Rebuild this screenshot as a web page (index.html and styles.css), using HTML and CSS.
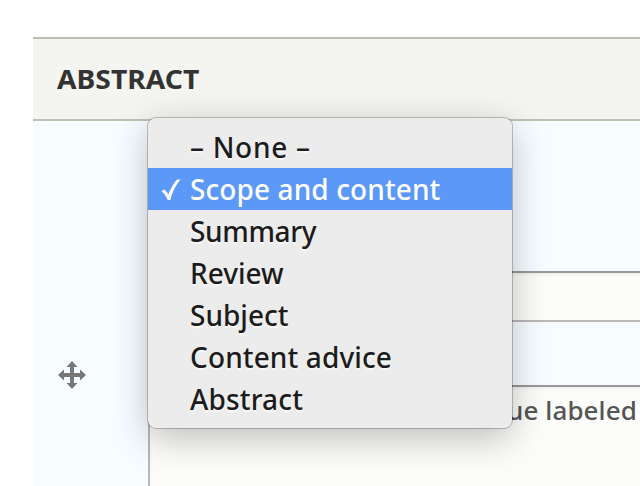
FILE: index.html
```
<!DOCTYPE html>
<html lang="en">
<head>
<meta charset="utf-8">
<title>Abstract</title>
<link rel="stylesheet" href="styles.css">
</head>
<body>
<main class="field">
  <header class="field-header"><h1>ABSTRACT</h1></header>
  <section class="row">
    <div class="handle">
      <svg width="28" height="28" viewBox="0 0 28 28"><path d="M14 0l5.500 6H16v6h6V8.500l6 5.500-6 5.500V16h-6v6h3.500L14 28l-5.500-6H12v-6H6v3.500L0 14l6-5.500V12h6V6H8.500z" fill="#777"/></svg>
    </div>
    <div class="inputs">
      <div class="text-input"></div>
      <div class="textarea">ue labeled</div>
    </div>
  </section>
</main>
<ul class="menu">
  <li><span class="none">– None –</span></li>
  <li class="selected"><svg class="check" width="20" height="22" viewBox="0 0 20 22"><path d="M0.500 12L3.500 10.500Q5.800 12.500 7.300 15.500Q11 6 16 0.500H19.500Q12 9.500 9.200 21H6.800Q4.500 15.500 0.500 12z" fill="#fff"/></svg><span class="scope">Scope and content</span></li>
  <li><span class="summary">Summary</span></li>
  <li><span>Review</span></li>
  <li><span>Subject</span></li>
  <li><span class="advice">Content advice</span></li>
  <li><span class="abstract">Abstract</span></li>
</ul>
</body>
</html>
```
FILE: styles.css
```
* { box-sizing: border-box; }
body {
  margin: 0;
  height: 486px;
  overflow: hidden;
  background: #fff;
  font-family: "Noto Sans", "Open Sans", sans-serif;
}
.field { margin-left: 33px; padding-top: 37px; }
.field-header {
  height: 84px;
  border-top: 2px solid #bdbdb3;
  border-bottom: 2px solid #bebfb5;
  background: #f4f5f0;
  padding-left: 24px;
  display: flex;
  align-items: center;
}
h1 {
  margin: 0;
  color: #333;
  font-size: 26px;
  line-height: 40px;
  font-weight: 700;
  transform: scaleX(1.087);
  transform-origin: left center;
}
.row { display: flex; height: 365px; background: #f6fcff; }
.handle { flex: 0 0 115px; padding: 240px 0 0 25px; }
.inputs { flex: 1; min-width: 0; padding-top: 150px; }
.text-input {
  height: 51px;
  margin-right: -10px;
  border: 2px solid #b8b8b8;
  border-top-color: #999;
  background: #fcfcfa;
  box-shadow: inset 0 2px 3px rgba(0, 0, 0, .05);
}
.textarea {
  height: 120px;
  margin-top: 63px;
  margin-right: -10px;
  padding: 3px 0 0 357px;
  overflow: hidden;
  border-left: 2px solid #b8b8b8;
  border-top: 2px solid #999;
  background: #fcfcfa;
  box-shadow: inset 0 2px 3px rgba(0, 0, 0, .05);
  color: #555;
  font-size: 26px;
  font-weight: 500;
  letter-spacing: .1px;
  line-height: 40px;
  white-space: nowrap;
}
.menu {
  position: absolute;
  left: 148px;
  top: 118px;
  width: 364px;
  height: 310px;
  margin: 0;
  padding: 8px 0;
  list-style: none;
  border-radius: 8px;
  background: #ececec;
  box-shadow: 0 0 0 1px rgba(0, 0, 0, .22), 0 10px 36px rgba(0, 0, 0, .25);
  color: #1c1c1c;
  font-size: 28px;
  font-weight: 500;
  white-space: nowrap;
}
.menu li {
  display: flex;
  align-items: center;
  height: 42px;
  padding: 0 0 0 42px;
  line-height: 40px;
  text-shadow: 0 2px 1px rgba(255, 255, 255, .6);
}
.menu .selected {
  position: relative;
  background: #5b98f8;
  color: #fff;
  text-shadow: none;
}
.none { letter-spacing: .7px; }
.scope { letter-spacing: .1px; }
.summary { letter-spacing: -.35px; }
.advice { letter-spacing: .12px; }
.abstract { letter-spacing: .15px; }
.check { position: absolute; left: 13px; top: 11px; }
```
